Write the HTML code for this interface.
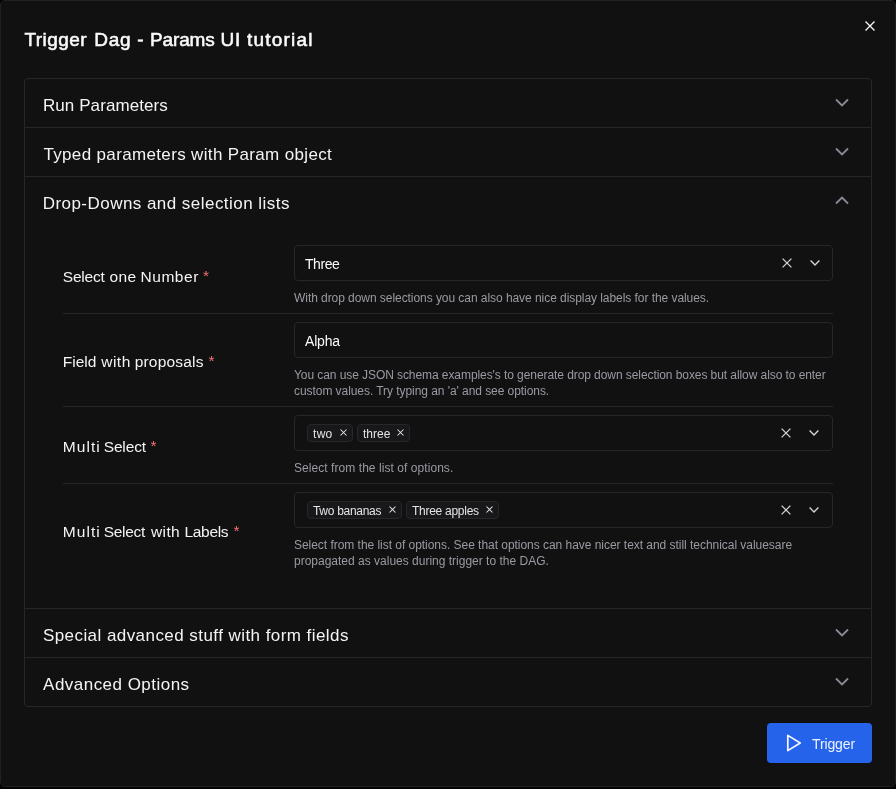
<!DOCTYPE html>
<html lang="en">
<head>
<meta charset="utf-8">
<title>Trigger Dag - Params UI tutorial</title>
<style>
*{box-sizing:border-box;margin:0;padding:0}
html,body{width:896px;height:789px;overflow:hidden;background:#030303;}
body{font-family:"Liberation Sans",sans-serif;color:#fafafa;position:relative;-webkit-font-smoothing:antialiased}
.modal{position:absolute;left:0;top:0;width:896px;height:787px;background:#111111;border-radius:5px;border:1px solid #212121}
.abs{position:absolute;white-space:nowrap}
.title{left:24px;top:27px;font-size:19px;font-weight:400;line-height:26px;color:#fafafa;-webkit-text-stroke:0.55px #fafafa}
.acc{position:absolute;left:24px;top:78px;width:848px;height:629px;border:1px solid #27272a;border-radius:4px}
.hline{position:absolute;left:25px;width:846px;height:1px;background:#27272a}
.head{font-size:17px;line-height:24px;left:43px;color:#f4f4f5}
.lbl{font-size:15.5px;line-height:22px;left:63px;color:#f4f4f5}
.lbl b{font-weight:400;color:#f87171;margin-left:0;top:-1px}
.w{position:absolute;white-space:pre;top:0}
.lbl b.w{top:-1px}
.inp{position:absolute;left:294px;width:539px;height:36px;border:1px solid #27272a;border-radius:4px}
.val{font-size:14px;line-height:20px;left:305px;color:#fafafa}
.help{font-size:12px;line-height:16px;left:294px;color:#9a9aa3}
.rowline{position:absolute;left:63px;width:770px;height:1px;background:#27272a}
.tag{position:absolute;height:18px;background:#18181b;border:1px solid #27272a;border-radius:4px}
.tagt{font-size:12px;line-height:16px;color:#e4e4e7}
svg{position:absolute;overflow:visible}
.btn{position:absolute;left:767px;top:723px;width:105px;height:40px;background:#2563eb;border-radius:4px}
.btnt{font-size:14px;line-height:20px;left:812px;top:734px;color:#eef2ff}
</style>
</head>
<body>
<div class="modal"></div>
<div id="layer" style="position:absolute;left:0;top:0;width:896px;height:789px;will-change:transform">

<div class="abs title" id="t_title"><span class="w" style="left:0.5px;letter-spacing:0.42px">Trigger </span><span class="w" style="left:70.3px;letter-spacing:0.7px">Dag </span><span class="w" style="left:113.2px;letter-spacing:0px">- </span><span class="w" style="left:126px;letter-spacing:-0.14px">Params </span><span class="w" style="left:196.4px;letter-spacing:1px">UI </span><span class="w" style="left:223.1px;letter-spacing:1.19px">tutorial</span></div>
<svg id="closex" style="left:865px;top:21px" width="10" height="10" viewBox="0 0 10 10"><path d="M0.5 0.5 L9.5 9.5 M9.5 0.5 L0.5 9.5" stroke="#fafafa" stroke-width="1.3" fill="none"/></svg>

<div class="acc"></div>
<div class="hline" style="top:127px"></div>
<div class="hline" style="top:176px"></div>
<div class="hline" style="top:608px"></div>
<div class="hline" style="top:657px"></div>

<div class="abs head" id="h1" style="top:94px;left:42.9px;letter-spacing:0.09px">Run Parameters</div>
<div class="abs head" id="h2" style="top:143px;left:43.4px;letter-spacing:0.35px">Typed parameters with Param object</div>
<div class="abs head" id="h3" style="top:192px;left:42.7px;letter-spacing:0.46px">Drop-Downs and selection lists</div>
<div class="abs head" id="h4" style="top:624px;left:42.9px;letter-spacing:0.44px">Special advanced stuff with form fields</div>
<div class="abs head" id="h5" style="top:673px;left:43.1px;letter-spacing:0.47px">Advanced Options</div>

<svg style="left:835px;top:98px" width="14" height="9" viewBox="0 0 14 9"><path d="M1 1.5 L7 7.5 L13 1.5" stroke="#8b8b98" stroke-width="1.8" fill="none"/></svg>
<svg style="left:835px;top:147px" width="14" height="9" viewBox="0 0 14 9"><path d="M1 1.5 L7 7.5 L13 1.5" stroke="#8b8b98" stroke-width="1.8" fill="none"/></svg>
<svg style="left:835px;top:196px" width="14" height="9" viewBox="0 0 14 9"><path d="M1 7.5 L7 1.5 L13 7.5" stroke="#8b8b98" stroke-width="1.8" fill="none"/></svg>
<svg style="left:835px;top:628px" width="14" height="9" viewBox="0 0 14 9"><path d="M1 1.5 L7 7.5 L13 1.5" stroke="#8b8b98" stroke-width="1.8" fill="none"/></svg>
<svg style="left:835px;top:677px" width="14" height="9" viewBox="0 0 14 9"><path d="M1 1.5 L7 7.5 L13 1.5" stroke="#8b8b98" stroke-width="1.8" fill="none"/></svg>

<!-- row 1 -->
<div class="abs lbl" id="l1" style="top:266px"><span class="w" style="left:-0.2px;letter-spacing:-0.22px">Select </span><span class="w" style="left:46.6px;letter-spacing:0.3px">one </span><span class="w" style="left:77.5px;letter-spacing:0.54px">Number</span><b class="w" style="left:139.9px">*</b></div>
<div class="inp" style="top:245px"></div>
<div class="abs val" id="v1" style="top:254px;letter-spacing:-0.45px">Three</div>
<div class="abs help" id="p1" style="top:290px;letter-spacing:-0.057px">With drop down selections you can also have nice display labels for the values.</div>
<div class="rowline" style="top:313px"></div>

<!-- row 2 -->
<div class="abs lbl" id="l2" style="top:350.5px"><span class="w" style="left:-0.2px;letter-spacing:-0.02px">Field </span><span class="w" style="left:38.3px;letter-spacing:0.47px">with </span><span class="w" style="left:71.7px;letter-spacing:0.2px">proposals</span><b class="w" style="left:145.5px">*</b></div>
<div class="inp" style="top:322px"></div>
<div class="abs val" id="v2" style="top:331px;letter-spacing:-0.17px">Alpha</div>
<div class="abs help" id="p2a" style="top:367px;letter-spacing:-0.075px">You can use JSON schema examples's to generate drop down selection boxes but allow also to enter</div>
<div class="abs help" id="p2b" style="top:383px;letter-spacing:-0.06px">custom values. Try typing an 'a' and see options.</div>
<div class="rowline" style="top:406px"></div>

<!-- row 3 -->
<div class="abs lbl" id="l3" style="top:436px"><span class="w" style="left:-0.2px;letter-spacing:1.03px">Multi </span><span class="w" style="left:40.7px;letter-spacing:-0.14px">Select</span><b class="w" style="left:87.6px">*</b></div>
<div class="inp" style="top:415px"></div>
<div class="abs help" id="p3" style="top:460px;letter-spacing:0.06px">Select from the list of options.</div>
<div class="rowline" style="top:483px"></div>

<!-- row 4 -->
<div class="abs lbl" id="l4" style="top:520.5px"><span class="w" style="left:-0.2px;letter-spacing:1.03px">Multi </span><span class="w" style="left:40.7px;letter-spacing:-0.28px">Select </span><span class="w" style="left:87.9px;letter-spacing:0.43px">with </span><span class="w" style="left:121.5px;letter-spacing:-0.32px">Labels</span><b class="w" style="left:170.5px">*</b></div>
<div class="inp" style="top:492px"></div>
<div class="abs help" id="p4a" style="top:537px;letter-spacing:-0.036px">Select from the list of options. See that options can have nicer text and still technical valuesare</div>
<div class="abs help" id="p4b" style="top:553px">propagated as values during trigger to the DAG.</div>


<!-- select icons -->
<svg class="cx" style="left:782px;top:258px" width="10" height="10" viewBox="0 0 10 10"><path d="M0.6 0.6 L9.4 9.4 M9.4 0.6 L0.6 9.4" stroke="#d4d4d8" stroke-width="1.3" fill="none"/></svg>
<svg class="cv" style="left:810px;top:260px" width="10" height="6" viewBox="0 0 10 6"><path d="M0.6 0.6 L5 5 L9.4 0.6" stroke="#d4d4d8" stroke-width="1.4" fill="none"/></svg>
<svg class="cx" style="left:781px;top:428px" width="10" height="10" viewBox="0 0 10 10"><path d="M0.6 0.6 L9.4 9.4 M9.4 0.6 L0.6 9.4" stroke="#d4d4d8" stroke-width="1.3" fill="none"/></svg>
<svg class="cv" style="left:809px;top:430px" width="10" height="6" viewBox="0 0 10 6"><path d="M0.6 0.6 L5 5 L9.4 0.6" stroke="#d4d4d8" stroke-width="1.4" fill="none"/></svg>
<svg class="cx" style="left:781px;top:505px" width="10" height="10" viewBox="0 0 10 10"><path d="M0.6 0.6 L9.4 9.4 M9.4 0.6 L0.6 9.4" stroke="#d4d4d8" stroke-width="1.3" fill="none"/></svg>
<svg class="cv" style="left:809px;top:507px" width="10" height="6" viewBox="0 0 10 6"><path d="M0.6 0.6 L5 5 L9.4 0.6" stroke="#d4d4d8" stroke-width="1.4" fill="none"/></svg>

<!-- tags -->
<div class="tag" style="left:307px;top:424px;width:46px"></div>
<div class="abs tagt" id="g1" style="left:313px;top:426px;letter-spacing:0.3px">two</div>
<svg style="left:339.5px;top:429.2px" width="7" height="7" viewBox="0 0 7 7"><path d="M0.5 0.5 L6.5 6.5 M6.5 0.5 L0.5 6.5" stroke="#e4e4e7" stroke-width="1.05" fill="none"/></svg>
<div class="tag" style="left:357px;top:424px;width:53px"></div>
<div class="abs tagt" id="g2" style="left:363px;top:426px">three</div>
<svg style="left:396.5px;top:429.2px" width="7" height="7" viewBox="0 0 7 7"><path d="M0.5 0.5 L6.5 6.5 M6.5 0.5 L0.5 6.5" stroke="#e4e4e7" stroke-width="1.05" fill="none"/></svg>
<div class="tag" style="left:307px;top:501px;width:95px"></div>
<div class="abs tagt" id="g3" style="left:313px;top:503px;letter-spacing:-0.3px">Two bananas</div>
<svg style="left:388.5px;top:506.2px" width="7" height="7" viewBox="0 0 7 7"><path d="M0.5 0.5 L6.5 6.5 M6.5 0.5 L0.5 6.5" stroke="#e4e4e7" stroke-width="1.05" fill="none"/></svg>
<div class="tag" style="left:406px;top:501px;width:93px"></div>
<div class="abs tagt" id="g4" style="left:412px;top:503px;letter-spacing:-0.27px">Three apples</div>
<svg style="left:485.5px;top:506.2px" width="7" height="7" viewBox="0 0 7 7"><path d="M0.5 0.5 L6.5 6.5 M6.5 0.5 L0.5 6.5" stroke="#e4e4e7" stroke-width="1.05" fill="none"/></svg>

<div class="btn"></div>
<svg style="left:786px;top:734px" width="16" height="18" viewBox="0 0 16 18"><path d="M1.8 1.4 L14.2 9 L1.8 16.6 Z" stroke="#f8faff" stroke-width="1.7" fill="none" stroke-linejoin="round"/></svg>
<div class="abs btnt" id="bt" style="letter-spacing:-0.12px">Trigger</div>
</div>
</body>
</html>
